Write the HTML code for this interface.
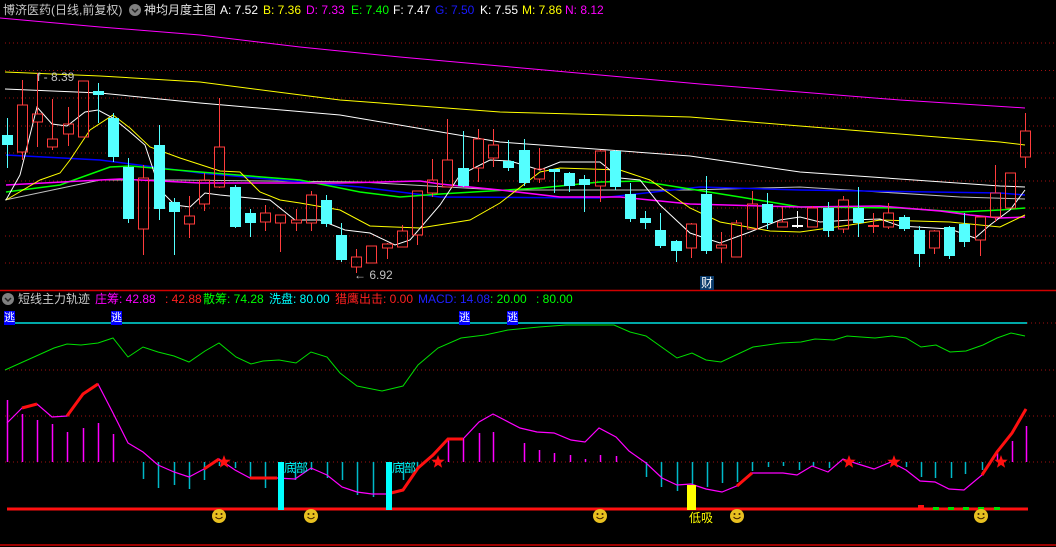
<!DOCTYPE html>
<html><head><meta charset="utf-8"><style>
html,body{margin:0;padding:0;background:#000;width:1056px;height:547px;overflow:hidden}
body{position:relative;font-family:"Liberation Sans","Noto Sans CJK SC",sans-serif;font-size:12px}
.t{position:absolute;white-space:nowrap;line-height:14px}
svg{position:absolute;left:0;top:0}
</style></head><body>
<svg id="s" width="1056" height="547" viewBox="0 0 1056 547"></svg>
<div class="t" style="left:3px;top:3px;color:#c8c8c8">博济医药(日线,前复权)</div>
<div class="t" style="left:144px;top:3px;color:#e0e0e0">神均月度主图</div>
<div class="t" style="left:220px;top:3px;color:#fff">A: 7.52</div>
<div class="t" style="left:263px;top:3px;color:#ffff00">B: 7.36</div>
<div class="t" style="left:306px;top:3px;color:#ff00ff">D: 7.33</div>
<div class="t" style="left:351px;top:3px;color:#00ff00">E: 7.40</div>
<div class="t" style="left:393px;top:3px;color:#fff">F: 7.47</div>
<div class="t" style="left:435px;top:3px;color:#1a1aff">G: 7.50</div>
<div class="t" style="left:480px;top:3px;color:#fff">K: 7.55</div>
<div class="t" style="left:522px;top:3px;color:#ffff00">M: 7.86</div>
<div class="t" style="left:565px;top:3px;color:#ff00ff">N: 8.12</div>

<div class="t" style="left:18px;top:292px;color:#c8c8c8">短线主力轨迹</div>
<div class="t" style="left:95px;top:292px;color:#ff00ff">庄筹: 42.88</div>
<div class="t" style="left:165px;top:292px;color:#ff2020">: 42.88</div>
<div class="t" style="left:203px;top:292px;color:#00ff00">散筹: 74.28</div>
<div class="t" style="left:269px;top:292px;color:#00ffff">洗盘: 80.00</div>
<div class="t" style="left:335px;top:292px;color:#ff2020">猎鹰出击: 0.00</div>
<div class="t" style="left:418px;top:292px;color:#2020ff">MACD: 14.08</div>
<div class="t" style="left:490px;top:292px;color:#00ff00">: 20.00</div>
<div class="t" style="left:536px;top:292px;color:#00ff00">: 80.00</div>

<div class="t" style="left:37px;top:70px;color:#c0c0c0">f - 8.39</div>
<div class="t" style="left:354px;top:268px;color:#c0c0c0">← 6.92</div>
<div class="t" style="left:700px;top:276px;color:#fff;background:#0a3a6a;padding:0 1px">财</div>
<div class="t" style="left:4px;top:311px;color:#fff;background:#0000ff;font-size:11px">逃</div>
<div class="t" style="left:111px;top:311px;color:#fff;background:#0000ff;font-size:11px">逃</div>
<div class="t" style="left:459px;top:311px;color:#fff;background:#0000ff;font-size:11px">逃</div>
<div class="t" style="left:507px;top:311px;color:#fff;background:#0000ff;font-size:11px">逃</div>
<div class="t" style="left:284px;top:461px;color:#00ffff">底部</div>
<div class="t" style="left:392px;top:461px;color:#00ffff">底部</div>
<div class="t" style="left:689px;top:511px;color:#ffff00">低吸</div>
<script>
var s=document.getElementById('s'),h='';
function L(x1,y1,x2,y2,c,w,d){h+='<line x1="'+x1+'" y1="'+y1+'" x2="'+x2+'" y2="'+y2+'" stroke="'+c+'" stroke-width="'+(w||1)+'"'+(d?' stroke-dasharray="'+d+'"':'')+'/>';}
function P(p,c,w){h+='<polyline fill="none" stroke="'+c+'" stroke-width="'+(w||1)+'" points="'+p.map(function(a){return a.join(',')}).join(' ')+'"/>';}
[43,70.5,98,126,153,181,208,236,263].forEach(function(y){L(5,y,1056,y,'#a01010',1,'1,3');});
L(0,290.5,1056,290.5,'#d00000',1.5);
L(0,545,1056,545,'#d00000',1.5);
h+='<circle cx="135" cy="10" r="6" fill="#808080"/><path d="M132 9l3 3 3-3" stroke="#222" fill="none" stroke-width="1.5"/>';
h+='<circle cx="8" cy="299" r="6" fill="#808080"/><path d="M5 298l3 3 3-3" stroke="#222" fill="none" stroke-width="1.5"/>';
P([[0,18],[100,27],[200,35],[300,47],[400,57],[500,66],[600,75],[700,84],[800,92],[900,100],[1025,108]],'#ff00ff');
P([[5,72],[100,76],[200,82],[340,100],[500,112],[690,117],[800,126],[1000,142],[1025,145]],'#ffff00');
P([[5,89],[100,93],[200,103],[340,115],[500,142],[690,156],[800,172],[1000,186],[1025,187]],'#ffffff');
P([[5,200],[100,180],[180,180],[360,182],[500,190],[690,190],[800,187],[960,197],[1025,199]],'#c0c0c0');
P([[6,155],[100,160],[200,173],[360,187],[440,197],[600,198],[700,187],[800,190],[1000,193],[1025,195]],'#0000ff',1.5);
P([[6,192],[60,185],[110,167],[130,166],[200,172],[300,180],[360,192],[400,197],[440,194],[540,188],[600,182],[640,181],[690,189],[740,197],[800,207],[900,208],[960,212],[1000,210],[1025,208]],'#00ff00',1.5);
P([[6,185],[100,180],[120,179],[200,183],[340,183],[420,181],[440,184],[500,190],[560,197],[620,197],[690,204],[800,207],[880,206],[940,211],[970,215],[1000,218],[1025,217]],'#ff00ff',1.5);
P([[6,200],[40,180],[60,173],[70,160],[90,130],[113,115],[130,128],[150,147],[180,158],[220,171],[240,172],[260,192],[280,200],[300,203],[340,210],[370,226],[420,228],[470,220],[500,203],[540,172],[560,168],[620,170],[650,180],[690,208],[720,222],[770,231],[800,232],[850,225],[880,220],[950,222],[1000,227],[1025,215]],'#ffff00');
P([[6,200],[20,175],[37,107],[52,124],[67,126],[85,112],[98,110],[113,118],[130,132],[145,145],[160,190],[175,205],[190,207],[205,193],[220,195],[250,198],[270,200],[295,220],[320,220],[345,230],[370,233],[395,245],[410,240],[440,205],[460,175],[490,160],[510,161],[540,170],[560,162],[600,162],[620,178],[640,180],[660,205],[690,233],[720,243],[750,232],[780,220],[800,217],[820,222],[850,220],[880,219],[900,226],[950,229],[975,238],[990,225],[1010,210],[1025,190]],'#ffffff');
var C=[[135,145,118,168,'c'],[105,152,80,160,'r'],[114,122,73,147,'r'],[139,147,99,150,'r'],[124,134,107,146,'r'],[81,137,81,137,'r'],[91,95,83,123,'c'],[118,157,113,162,'c'],[167,219,158,223,'c'],[178,229,165,255,'r'],[145,209,125,220,'c'],[202,212,198,255,'c'],[216,224,196,238,'r'],[180,204,173,211,'r'],[147,187,98,188,'r'],[187,227,185,228,'c'],[213,223,209,237,'c'],[213,222,205,231,'r'],[215,223,215,252,'r'],[220,223,209,231,'r'],[195,223,191,231,'r'],[200,224,195,227,'c'],[235,260,223,262,'c'],[257,267,249,273,'r'],[246,263,246,263,'r'],[244,248,243,259,'r'],[231,247,225,247,'r'],[191,235,191,245,'r'],[180,193,159,197,'r'],[160,187,119,187,'r'],[168,186,131,187,'c'],[139,168,129,182,'r'],[145,158,129,167,'r'],[161,168,140,171,'c'],[150,183,139,186,'c'],[169,179,148,183,'r'],[169,172,169,193,'c'],[173,186,172,192,'c'],[179,185,175,212,'c'],[151,186,150,202,'r'],[151,187,150,190,'c'],[194,219,183,222,'c'],[218,223,211,229,'c'],[230,246,213,248,'c'],[241,251,240,262,'c'],[224,248,223,258,'r'],[194,251,176,254,'c'],[245,248,232,263,'r'],[223,257,220,257,'r'],[204,229,191,229,'r'],[204,223,193,229,'c'],[222,227,207,227,'r'],[226,227,211,228,'w'],[208,227,206,227,'r'],[208,231,202,237,'c'],[200,229,196,233,'r'],[208,223,187,237,'c'],[226,227,213,233,'r'],[213,227,203,229,'r'],[217,229,215,231,'c'],[230,254,226,267,'c'],[231,248,230,254,'r'],[227,256,226,259,'c'],[224,242,213,247,'c'],[217,240,217,256,'r'],[193,217,165,222,'r'],[173,208,173,208,'r'],[131,157,113,168,'r']];
C.forEach(function(c,i){var x=Math.round(6.7+15.2*i)+0.5,t=c[4];
 var col=t=='c'?'#54ffff':(t=='w'?'#ffffff':'#ff3c3c');
 L(x,c[2],x,c[0],col);L(x,c[1],x,c[3],col);
 if(t=='c')h+='<rect x="'+(x-5.5)+'" y="'+c[0]+'" width="11" height="'+Math.max(1,c[1]-c[0])+'" fill="'+col+'"/>';
 else if(c[1]-c[0]<3)L(x-5.5,c[0],x+5.5,c[0],col,2);
 else h+='<rect x="'+(x-5)+'" y="'+c[0]+'" width="10" height="'+(c[1]-c[0])+'" fill="none" stroke="'+col+'"/>';
});
L(5,323,1027,323,'#00e0e0',1.5);L(1027,323,1056,323,'#a01010',1,'1,3');
[370,416,462].forEach(function(y){L(5,y,1056,y,'#a01010',1,'1,3');});
P([[5,370],[54,348],[67,344],[81,345],[98,343],[113,338],[128,357],[143,347],[158,352],[174,356],[189,362],[205,351],[219,343],[236,357],[251,364],[263,361],[279,360],[296,363],[311,352],[327,357],[340,373],[357,386],[382,391],[403,386],[418,365],[438,348],[461,338],[485,335],[508,330],[539,327],[566,325],[614,325],[630,332],[646,336],[677,358],[692,353],[706,360],[721,362],[753,347],[781,343],[801,342],[815,339],[834,340],[847,336],[875,338],[892,336],[906,338],[921,347],[936,345],[950,352],[966,351],[983,345],[997,338],[1011,333],[1025,336]],'#00e000');
[[7,400],[22,414],[37,420],[52,424],[67,432],[83,428],[98,423],[113,434],[448,439],[463,439],[479,433],[493,432],[524,443],[539,450],[554,453],[570,455],[585,459],[600,455],[616,456],[997,453],[1012,441],[1026,426]].forEach(function(b){L(b[0]+.5,b[1],b[0]+.5,462,'#ff00ff',1.5);});
[[143,479],[158,488],[174,485],[189,489],[204,480],[219,466],[235,468],[250,477],[265,488],[295,480],[311,470],[327,478],[342,480],[357,495],[373,497],[403,480],[417,470],[646,477],[661,487],[677,491],[692,488],[707,487],[722,483],[737,482],[752,471],[768,467],[783,466],[799,470],[813,466],[829,468],[859,463],[906,467],[921,477],[935,478],[951,478],[965,474],[982,470]].forEach(function(b){L(b[0]+.5,462,b[0]+.5,b[1],'#00b8c8',1.5);});
var M=[[7,423],[22,408],[37,404],[52,417],[67,416],[83,394],[98,384],[113,413],[128,443],[143,452],[158,465],[174,472],[189,477],[204,469],[219,459],[235,470],[250,478],[277,478],[295,479],[311,468],[327,475],[342,487],[357,492],[372,494],[387,494],[403,490],[418,468],[433,455],[448,439],[463,439],[479,422],[493,414],[520,428],[537,432],[554,433],[571,440],[585,442],[599,428],[616,437],[629,451],[646,463],[662,478],[677,485],[691,484],[706,489],[722,492],[739,485],[752,473],[783,473],[797,475],[812,466],[828,472],[843,459],[858,464],[874,469],[891,462],[906,470],[920,481],[935,482],[949,489],[964,490],[982,475],[997,452],[1012,433],[1026,409]];
P(M,'#ff00ff',1.2);
P([[22,408],[37,404]],'#ff1010',3);P([[67,416],[83,394],[98,384]],'#ff1010',3);P([[204,469],[219,459]],'#ff1010',3);P([[250,478],[277,478]],'#ff1010',3);
P([[387,494],[403,490],[418,468],[433,455],[448,439],[463,439]],'#ff1010',3);
P([[737,486],[752,473]],'#ff1010',3);
P([[982,475],[997,452],[1012,433],[1026,409]],'#ff1010',3);
L(7,509,1028,509,'#ff1010',3);
h+='<rect x="278" y="462" width="6" height="48" fill="#00ffff"/><rect x="386" y="462" width="6" height="48" fill="#00ffff"/><rect x="687" y="485" width="9" height="25" fill="#ffff00"/>';
[[918,'#ff1010'],[933,'#00e000'],[948,'#00e000'],[963,'#00e000'],[978,'#00e000'],[994,'#00e000']].forEach(function(g){h+='<rect x="'+g[0]+'" y="'+(g[1]=='#ff1010'?505:507)+'" width="6" height="3" fill="'+g[1]+'"/>';});
[219,311,600,737,981].forEach(function(x){h+='<circle cx="'+x+'" cy="516" r="7" fill="#e8c020"/><circle cx="'+(x-2.5)+'" cy="514" r="1" fill="#402000"/><circle cx="'+(x+2.5)+'" cy="514" r="1" fill="#402000"/><path d="M'+(x-3.5)+' 517q3.5 3.5 7 0" stroke="#402000" fill="none"/>';});
function star(cx,cy,r){var p=[];for(var i=0;i<10;i++){var a=Math.PI/5*i-Math.PI/2,rr=i%2?r*0.42:r;p.push((cx+rr*Math.cos(a)).toFixed(1)+','+(cy+rr*Math.sin(a)).toFixed(1));}h+='<polygon points="'+p.join(' ')+'" fill="#ff1010"/>';}
[224,438,849,894,1001].forEach(function(x){star(x,462,7);});
s.innerHTML=h;
</script>
</body></html>
